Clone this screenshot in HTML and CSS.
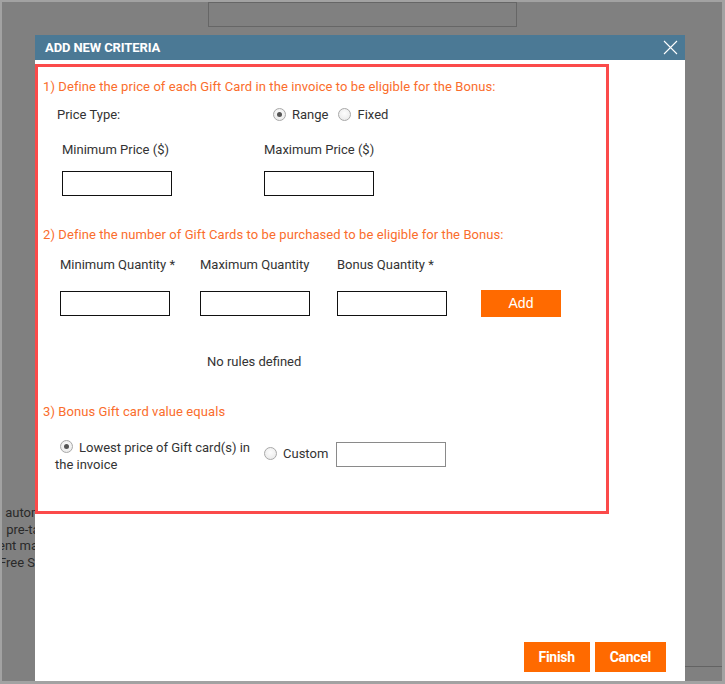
FILE: index.html
```html
<!DOCTYPE html>
<html>
<head>
<meta charset="utf-8">
<link rel="stylesheet" href="styles.css">
</head>
<body>
<div class="frame">
  <div class="bg-box"></div>
  <div class="bg-text">
    <div class="l1">&nbsp;automatically</div>
    <div class="l2">&nbsp;pre-tax</div>
    <div class="l3">ent may</div>
    <div class="l4">Free Shipping</div>
  </div>
  <div class="bg-line"></div>

  <div class="modal">
    <div class="modal-header">
      <span class="modal-title">ADD NEW CRITERIA</span>
      <svg class="close" width="15" height="15" viewBox="0 0 15 15"><path d="M1 1L14 14M14 1L1 14" stroke="#fff" stroke-width="1.1" fill="none"/></svg>
    </div>
    <div class="criteria">
      <div class="step">1) Define the price of each Gift Card in the invoice to be eligible for the Bonus:</div>
      <div class="price-type">
        <span class="pt-label">Price Type:</span>
        <label class="opt"><span class="radio checked"></span>Range</label>
        <label class="opt"><span class="radio"></span>Fixed</label>
      </div>
      <div class="price-fields">
        <div class="field">
          <div class="flabel">Minimum Price ($)</div>
          <div class="box"></div>
        </div>
        <div class="field">
          <div class="flabel">Maximum Price ($)</div>
          <div class="box"></div>
        </div>
      </div>
      <div class="step step2">2) Define the number of Gift Cards to be purchased to be eligible for the Bonus:</div>
      <div class="qty-fields">
        <div class="qfield q1">
          <div class="flabel">Minimum Quantity *</div>
          <div class="box"></div>
        </div>
        <div class="qfield q2">
          <div class="flabel">Maximum Quantity</div>
          <div class="box"></div>
        </div>
        <div class="qfield q3">
          <div class="flabel">Bonus Quantity *</div>
          <div class="box"></div>
        </div>
        <div class="add-btn">Add</div>
      </div>
      <div class="no-rules">No rules defined</div>
      <div class="step step3">3) Bonus Gift card value equals</div>
      <div class="value-row">
        <div class="lowest"><span class="radio checked"></span>Lowest price of Gift card(s) in the invoice</div>
        <div class="custom"><span class="radio"></span>Custom</div>
        <div class="box gray"></div>
      </div>
    </div>
    <div class="footer">
      <div class="btn">Finish</div>
      <div class="btn">Cancel</div>
    </div>
  </div>
</div>
</body>
</html>
```

FILE: styles.css
```css
html, body {
  margin: 0;
  padding: 0;
}
body {
  width: 725px;
  height: 684px;
  overflow: hidden;
  font-family: Roboto, "Liberation Sans", sans-serif;
  font-size: 13px;
  color: #333;
}
.frame {
  position: relative;
  box-sizing: border-box;
  width: 725px;
  height: 684px;
  background: #808080;
  border-style: solid;
  border-color: #a2a2a2;
  border-width: 2px 3px 3px 2px;
  overflow: hidden;
}
.bg-box {
  position: absolute;
  left: 206px;
  top: 0px;
  width: 307px;
  height: 23px;
  border: 1px solid #666;
}
.bg-text {
  position: absolute;
  left: 0;
  top: 503px;
  color: #2a2a2a;
  font-size: 13px;
  line-height: 16.5px;
  white-space: nowrap;
}
.bg-text .l1 { margin-left: 0; }
.bg-text .l2 { margin-left: 1px; }
.bg-text .l3 { margin-left: -4px; }
.bg-text .l4 { margin-left: -3px; }
.bg-line {
  position: absolute;
  left: 683px;
  top: 664px;
  width: 40px;
  height: 1px;
  background: #636363;
}
.modal {
  position: absolute;
  left: 33px;
  top: 33px;
  width: 650px;
  height: 650px;
  background: #fff;
}
.modal-header {
  height: 25px;
  background: #4b7995;
  display: flex;
  align-items: center;
  justify-content: space-between;
  padding: 0 7px 0 10px;
}
.modal-title {
  color: #fff;
  font-weight: bold;
  font-size: 13px;
  letter-spacing: -0.1px;
}
.close {
  display: block;
}
.criteria {
  box-sizing: border-box;
  margin-top: 4px;
  width: 574px;
  height: 450px;
  border: 3px solid #fb4a4a;
  padding: 12px 5px 0 5px;
}
.step {
  color: #fa6d2c;
  line-height: 16px;
  height: 16px;
  letter-spacing: 0.08px;
}
.price-type {
  display: flex;
  align-items: center;
  margin-top: 11px;
  height: 16px;
  padding-left: 14px;
}
.pt-label {
  width: 216px;
}
.opt {
  display: flex;
  align-items: center;
  margin-right: 10px;
}
.radio {
  display: inline-block;
  box-sizing: border-box;
  width: 13px;
  height: 13px;
  border-radius: 50%;
  border: 1px solid #a8a8a8;
  background: radial-gradient(circle at 50% 40%, #fdfdfd 0%, #e6e6e6 100%);
  margin-right: 6px;
  position: relative;
  flex: none;
}
.radio.checked::after {
  content: "";
  position: absolute;
  left: 3px;
  top: 3px;
  width: 5px;
  height: 5px;
  border-radius: 50%;
  background: #555;
}
.price-fields {
  display: flex;
  margin-top: 20px;
  padding-left: 19px;
}
.field {
  width: 202px;
}
.flabel {
  line-height: 16px;
  height: 16px;
  white-space: nowrap;
}
.box {
  box-sizing: border-box;
  width: 110px;
  height: 25px;
  border: 1px solid #111;
  background: #fff;
}
.field .box {
  margin-top: 13px;
}
.step2 {
  margin-top: 31px;
}
.qty-fields {
  display: flex;
  margin-top: 14px;
  padding-left: 17px;
  align-items: flex-start;
}
.qfield.q1 { width: 140px; }
.qfield.q2 { width: 137px; }
.qfield.q3 { width: 110px; }
.qfield .box {
  margin-top: 18px;
}
.add-btn {
  margin-left: 34px;
  margin-top: 33px;
  width: 80px;
  height: 27px;
  background: #ff6a00;
  color: #fff;
  font-family: "Liberation Sans", Arial, sans-serif;
  font-size: 14px;
  line-height: 27px;
  text-align: center;
}
.no-rules {
  margin-top: 37px;
  padding-left: 164px;
  line-height: 16px;
  height: 16px;
}
.step3 {
  margin-top: 34px;
}
.value-row {
  display: flex;
  align-items: center;
  margin-top: 19px;
  padding-left: 12px;
}
.lowest {
  width: 205px;
  line-height: 17px;
  text-indent: 5px;
}
.lowest .radio {
  vertical-align: -1px;
  text-indent: 0;
}
.custom {
  display: flex;
  align-items: center;
  margin-left: 4px;
  margin-right: 8px;
  margin-bottom: 5px;
}
.box.gray {
  border-color: #8a8a8a;
  margin-bottom: 4px;
}
.footer {
  display: flex;
  justify-content: flex-end;
  gap: 5px;
  margin-top: 128px;
  padding-right: 19px;
}
.btn {
  height: 30px;
  padding: 0 15px;
  background: #ff6a00;
  color: #fff;
  font-weight: bold;
  font-size: 14px;
  line-height: 30px;
  letter-spacing: -0.3px;
}
```
